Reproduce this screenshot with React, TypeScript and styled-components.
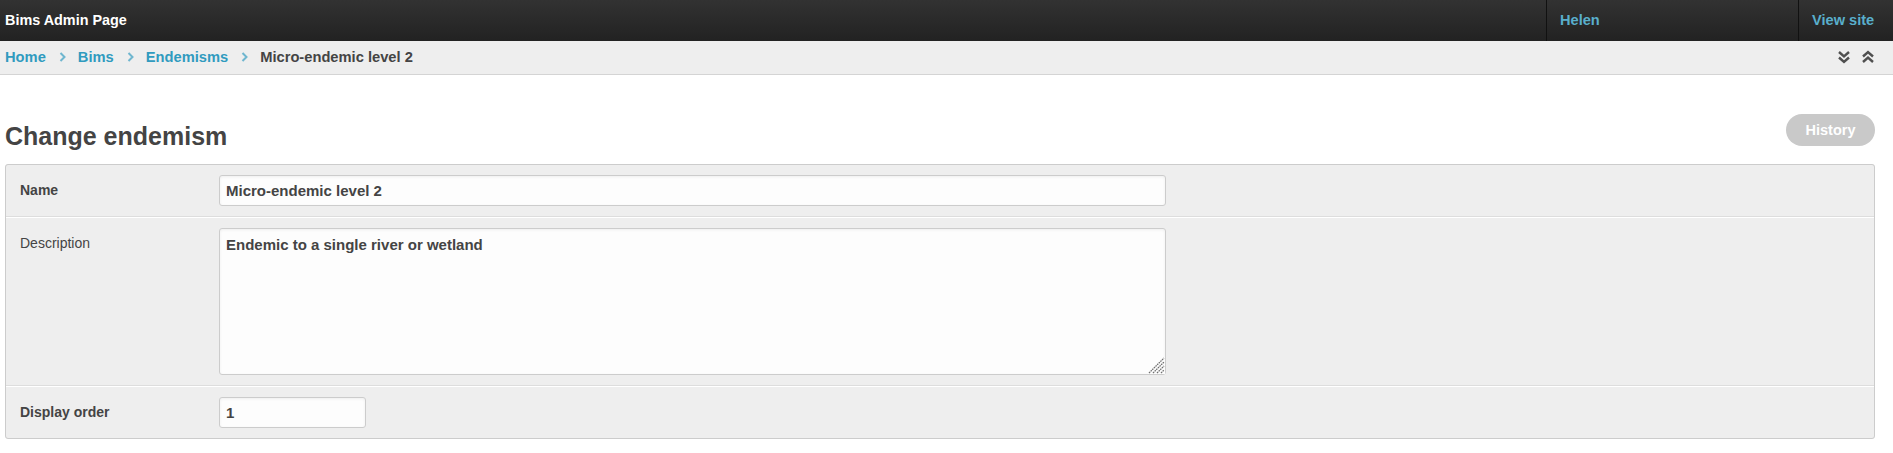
import React from "react";
import styled, { createGlobalStyle } from "styled-components";

const GlobalStyle = createGlobalStyle`
  html, body { margin: 0; padding: 0; background: #fff; }
  body { font-family: "Liberation Sans", Arial, sans-serif; color: #444; }
  * { box-sizing: border-box; }
`;

const Header = styled.header`
  display: flex;
  height: 41px;
  background: linear-gradient(#323232, #222);
`;

const Brand = styled.div`
  display: flex;
  align-items: center;
  padding: 0 0 2px 5px;
  font-weight: bold;
  font-size: 14.4px;
  color: #fff;
`;

const UserTools = styled.ul`
  margin: 0 0 0 auto;
  padding: 0;
  list-style: none;
  display: flex;
`;

const ToolItem = styled.li<{ $width: number }>`
  width: ${(p) => p.$width}px;
  display: flex;
  align-items: center;
  padding: 0 0 2px 13px;
  border-left: 1px solid #111;
`;

const ToolLink = styled.a`
  color: #59afcc;
  font-weight: bold;
  font-size: 14.6px;
  text-decoration: none;
`;

const Breadcrumbs = styled.nav`
  display: flex;
  align-items: center;
  height: 34px;
  padding: 0 18px 1px 5px;
  background: #eee;
  border-bottom: 1px solid #d4d4d4;
  font-size: 14.7px;
  font-weight: bold;
`;

const Crumb = styled.a`
  color: #309bbf;
  text-decoration: none;
`;

const CurrentCrumb = styled.span`
  color: #444;
`;

const Sep = styled.svg`
  margin: 0 12px 0 13px;
  flex: none;
`;

const CollapseTools = styled.div`
  margin-left: auto;
  display: flex;
  gap: 10px;
  align-items: center;
`;

const Content = styled.main`
  padding: 0 18px 0 5px;
`;

const TitleRow = styled.div`
  display: flex;
  justify-content: space-between;
  align-items: flex-start;
  padding-top: 39px;
`;

const Title = styled.h1`
  margin: 0;
  padding-top: 6px;
  font-size: 25px;
  line-height: 32px;
  font-weight: bold;
  color: #444;
`;

const HistoryButton = styled.a`
  display: flex;
  align-items: center;
  justify-content: center;
  width: 89px;
  height: 32px;
  border-radius: 16px;
  background: #c9c9c9;
  color: #fff;
  font-weight: bold;
  font-size: 14.5px;
  text-decoration: none;
`;

const Module = styled.fieldset`
  margin: 12px 0 0;
  padding: 0;
  border: 1px solid #ccc;
  border-radius: 3px;
  background: #eee;
  min-width: 0;
`;

const Row = styled.div`
  display: grid;
  grid-template-columns: 213px 1fr;
  padding: 10px 0;
  border-top: 1px solid #fff;
  border-bottom: 1px solid #ddd;
  &:first-child { border-top: none; }
  &:last-child { border-bottom: none; }
`;

const Label = styled.label<{ $required?: boolean }>`
  padding-left: 14px;
  line-height: 31px;
  font-size: 14px;
  font-weight: ${(p) => (p.$required ? "bold" : "normal")};
  color: #444;
`;

const fieldBase = `
  border: 1px solid #ccc;
  border-radius: 3px;
  background: #fdfdfd;
  box-shadow: inset 0 1px 3px 0 #eee;
  font-family: "Liberation Sans", Arial, sans-serif;
  font-size: 15px;
  font-weight: bold;
  color: #444;
  outline: none;
`;

const TextInput = styled.input<{ $width: number }>`
  ${fieldBase}
  width: ${(p) => p.$width}px;
  height: 31px;
  padding: 0 6px;
`;

const AreaWrap = styled.div`
  position: relative;
  width: 947px;
`;

const TextArea = styled.textarea`
  ${fieldBase}
  display: block;
  width: 947px;
  height: 147px;
  padding: 6px 6px;
  line-height: 20px;
`;

const Grip = styled.svg`
  position: absolute;
  right: 1px;
  bottom: 1px;
  pointer-events: none;
  background: #fdfdfd;
`;

const Chevron = () => (
  <Sep width="7" height="10" viewBox="0 0 7 10">
    <polyline points="1.5,1 5.5,5 1.5,9" fill="none" stroke="#6fb6cf" strokeWidth="2" />
  </Sep>
);

const DoubleChevron = ({ up }: { up?: boolean }) => (
  <svg width="14" height="14" viewBox="0 0 14 14" style={up ? { transform: "scaleY(-1)" } : undefined}>
    <polyline points="2,2 7,6.5 12,2" fill="none" stroke="#4f4f4f" strokeWidth="2.4" />
    <polyline points="2,7.5 7,12 12,7.5" fill="none" stroke="#4f4f4f" strokeWidth="2.4" />
  </svg>
);

export default function App() {
  return (
    <>
      <GlobalStyle />
      <Header>
        <Brand>Bims Admin Page</Brand>
        <UserTools>
          <ToolItem $width={252}>
            <ToolLink href="#">Helen</ToolLink>
          </ToolItem>
          <ToolItem $width={95}>
            <ToolLink href="#">View site</ToolLink>
          </ToolItem>
        </UserTools>
      </Header>
      <Breadcrumbs>
        <Crumb href="#">Home</Crumb>
        <Chevron />
        <Crumb href="#">Bims</Crumb>
        <Chevron />
        <Crumb href="#">Endemisms</Crumb>
        <Chevron />
        <CurrentCrumb>Micro-endemic level 2</CurrentCrumb>
        <CollapseTools>
          <DoubleChevron />
          <DoubleChevron up />
        </CollapseTools>
      </Breadcrumbs>
      <Content>
        <TitleRow>
          <Title>Change endemism</Title>
          <HistoryButton href="#">History</HistoryButton>
        </TitleRow>
        <Module>
          <Row>
            <Label $required>Name</Label>
            <div>
              <TextInput $width={947} defaultValue="Micro-endemic level 2" />
            </div>
          </Row>
          <Row>
            <Label>Description</Label>
            <AreaWrap>
              <TextArea defaultValue="Endemic to a single river or wetland" />
              <Grip width="17" height="17" viewBox="0 0 17 17">
                <g stroke="#707070" strokeWidth="1.3" strokeDasharray="1.6 0.7">
                  <line x1="1" y1="16" x2="16" y2="1" />
                  <line x1="5" y1="16" x2="16" y2="5" />
                  <line x1="9" y1="16" x2="16" y2="9" />
                  <line x1="13" y1="16" x2="16" y2="13" />
                </g>
              </Grip>
            </AreaWrap>
          </Row>
          <Row>
            <Label $required>Display order</Label>
            <div>
              <TextInput $width={147} defaultValue="1" />
            </div>
          </Row>
        </Module>
      </Content>
    </>
  );
}
